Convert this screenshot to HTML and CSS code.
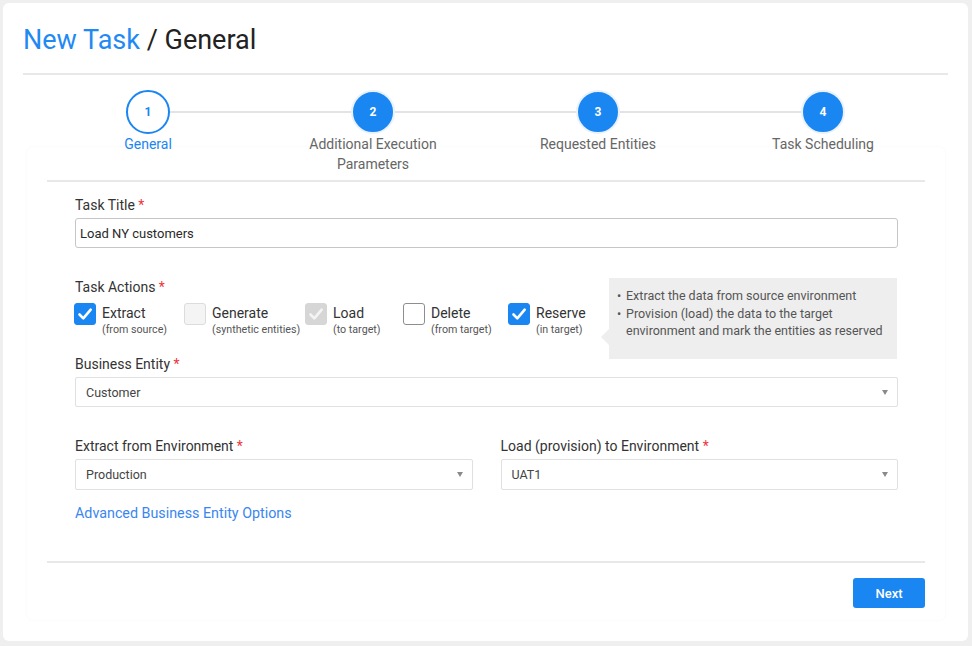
FILE: index.html
```html
<!DOCTYPE html>
<html lang="en">
<head>
<meta charset="utf-8">
<title>New Task / General</title>
<link rel="stylesheet" href="styles.css">
</head>
<body>
<div class="page">
  <header class="head">
    <h1><span class="crumb">New Task</span> / General</h1>
  </header>

  <ol class="stepper">
    <li class="step active"><span class="dot">1</span><span class="step-label">General</span></li>
    <li class="step"><span class="dot">2</span><span class="step-label">Additional Execution Parameters</span></li>
    <li class="step"><span class="dot">3</span><span class="step-label">Requested Entities</span></li>
    <li class="step"><span class="dot">4</span><span class="step-label">Task Scheduling</span></li>
  </ol>

  <section class="card">
    <form class="form">
      <div class="field">
        <label class="label">Task Title <span class="req">*</span></label>
        <input class="input" type="text" value="Load NY customers">
      </div>

      <div class="field actions">
        <div class="label">Task Actions <span class="req">*</span></div>
        <div class="checks">
          <div class="check">
            <span class="box on"><svg viewBox="0 0 22 22"><path d="M5.5 11.5l3.8 3.8 7.4-8.6"/></svg></span>
            <span class="check-text"><span class="check-name">Extract</span><span class="check-sub">(from source)</span></span>
          </div>
          <div class="check">
            <span class="box disabled"></span>
            <span class="check-text"><span class="check-name">Generate</span><span class="check-sub">(synthetic entities)</span></span>
          </div>
          <div class="check">
            <span class="box disabled-on"><svg viewBox="0 0 22 22"><path d="M5.5 11.5l3.8 3.8 7.4-8.6"/></svg></span>
            <span class="check-text"><span class="check-name">Load</span><span class="check-sub">(to target)</span></span>
          </div>
          <div class="check">
            <span class="box"></span>
            <span class="check-text"><span class="check-name">Delete</span><span class="check-sub">(from target)</span></span>
          </div>
          <div class="check">
            <span class="box on"><svg viewBox="0 0 22 22"><path d="M5.5 11.5l3.8 3.8 7.4-8.6"/></svg></span>
            <span class="check-text"><span class="check-name">Reserve</span><span class="check-sub">(in target)</span></span>
          </div>
        </div>
        <div class="tip">
          <ul>
            <li>Extract the data from source environment</li>
            <li>Provision (load) the data to the target environment and mark the entities as reserved</li>
          </ul>
        </div>
      </div>

      <div class="field be">
        <div class="label">Business Entity <span class="req">*</span></div>
        <div class="select"><span>Customer</span><i class="caret"></i></div>
      </div>

      <div class="env-row">
        <div class="field">
          <div class="label">Extract from Environment <span class="req">*</span></div>
          <div class="select tall"><span>Production</span><i class="caret"></i></div>
        </div>
        <div class="field">
          <div class="label">Load (provision) to Environment <span class="req">*</span></div>
          <div class="select tall"><span>UAT1</span><i class="caret"></i></div>
        </div>
      </div>

      <a class="adv-link" href="#">Advanced Business Entity Options</a>
    </form>

    <footer class="card-foot">
      <button class="btn" type="button">Next</button>
    </footer>
  </section>
</div>
</body>
</html>
```

FILE: styles.css
```css
* { box-sizing: border-box; }

html, body {
  margin: 0;
  background: #efefef;
  font-family: Roboto, "Noto Sans", Arial, sans-serif;
  color: #333;
}

.page {
  width: 965px;
  margin: 3px 4px 0 3px;
  background: #fff;
  border-radius: 6px;
  padding: 22px 20px 21px;
}

.head {
  border-bottom: 2px solid #e8e8e8;
  padding-bottom: 17px;
}

.head h1 {
  margin: 0;
  font-size: 27px;
  line-height: 31px;
  font-weight: 400;
  color: #222;
}

.crumb { color: #1f89f4; }

/* Stepper */
.stepper {
  list-style: none;
  margin: 15px 0 0;
  padding: 0;
  height: 90px;
  display: grid;
  grid-template-columns: repeat(4, 225px);
  justify-content: center;
  position: relative;
  z-index: 1;
}

.step {
  position: relative;
  display: flex;
  flex-direction: column;
  align-items: center;
}

.step:not(:last-child)::after {
  content: "";
  position: absolute;
  top: 21px;
  left: 50%;
  width: 100%;
  height: 2px;
  background: #e3e3e3;
}

.dot {
  position: relative;
  z-index: 1;
  width: 44px;
  height: 44px;
  border-radius: 50%;
  background: #1a86f2;
  border: 2px solid #e9f1fb;
  color: #fff;
  font-size: 12px;
  font-weight: 700;
  display: flex;
  align-items: center;
  justify-content: center;
}

.step.active .dot {
  background: #fff;
  border: 2px solid #1a86f2;
  color: #1a86f2;
}

.step-label {
  margin-top: 1px;
  max-width: 150px;
  text-align: center;
  font-size: 14px;
  line-height: 19.5px;
  color: #666;
}

.step.active .step-label { color: #1a86f2; }

/* Card */
.card {
  margin: -33px 3px 0 4px;
  padding: 33px 20px 12px;
  background: #fff;
  border-radius: 6px;
  box-shadow: 0 0 3px rgba(0, 0, 0, 0.045);
}

.form {
  border-top: 2px solid #e8e8e8;
  padding: 15px 27px 39px 28px;
  display: flex;
  flex-direction: column;
}

.field { display: flex; flex-direction: column; }

.label {
  font-size: 14px;
  line-height: 17px;
  color: #333;
  margin-bottom: 4px;
}

.req { color: #f0323c; }

.input {
  height: 30px;
  border: 1px solid #c6c6c6;
  border-radius: 3px;
  padding: 0 4px;
  font-family: inherit;
  font-size: 13px;
  color: #2a2a2a;
  margin-bottom: 31px;
  outline: none;
}

/* Actions */
.actions { position: relative; }

.actions .label { margin-bottom: 7px; }

.checks {
  display: grid;
  grid-template-columns: 110px 121px 98px 105px auto;
  margin-left: -1px;
}

.check { display: flex; align-items: flex-start; }

.box {
  flex: none;
  width: 22px;
  height: 22px;
  border-radius: 3px;
  border: 1px solid #8e8e8e;
  background: #fff;
  margin-right: 6px;
  display: flex;
}

.box svg { width: 22px; height: 22px; margin: -1px; }
.box path { fill: none; stroke: #fff; stroke-width: 2.6; stroke-linecap: round; stroke-linejoin: round; }

.box.on { background: #1a86f2; border-color: #1a86f2; }
.box.disabled { background: #f4f4f4; border-color: #dcdcdc; }
.box.disabled-on { background: #d6d6d6; border-color: #d6d6d6; }
.box.disabled-on path { stroke: #f4f4f4; }

.check-text {
  display: flex;
  flex-direction: column;
  padding-top: 2px;
}

.check-name { font-size: 14px; line-height: 17px; color: #333; }
.check-sub { font-size: 10.7px; line-height: 15px; color: #555; }

.tip {
  position: absolute;
  left: 534px;
  top: -1px;
  width: 288px;
  height: 81px;
  background: #eeeeee;
  padding: 9px 8px 0;
}

.tip::before {
  content: "";
  position: absolute;
  left: -8px;
  top: 51px;
  border-top: 8px solid transparent;
  border-bottom: 8px solid transparent;
  border-right: 8px solid #eeeeee;
}

.tip ul { margin: 0; padding: 0; list-style: none; }

.tip li {
  position: relative;
  padding-left: 9px;
  font-size: 12.5px;
  line-height: 17.5px;
  color: #555;
}

.tip li::before {
  content: "•";
  position: absolute;
  left: 0;
  font-size: 12.5px;
}

.be { margin-top: 19px; }

.select {
  height: 30px;
  border: 1px solid #e0e0e0;
  border-radius: 2px;
  padding: 0 9px 0 10px;
  display: flex;
  align-items: center;
  justify-content: space-between;
  font-size: 12.5px;
  color: #444;
}

.select.tall { height: 31px; }

.caret {
  width: 0;
  height: 0;
  border-left: 3.5px solid transparent;
  border-right: 3.5px solid transparent;
  border-top: 5px solid #8a8a8a;
}

.env-row {
  margin-top: 31px;
  display: grid;
  grid-template-columns: 1fr 1fr;
  column-gap: 28px;
}

.adv-link {
  margin-top: 15px;
  font-size: 14.3px;
  line-height: 17px;
  color: #3a86f0;
  text-decoration: none;
  align-self: flex-start;
}

.card-foot {
  border-top: 2px solid #e8e8e8;
  padding-top: 15px;
  display: flex;
  justify-content: flex-end;
}

.btn {
  width: 72px;
  height: 30px;
  border: 0;
  border-radius: 3px;
  background: #1a86f2;
  color: #fff;
  font-family: inherit;
  font-size: 13px;
  font-weight: 500;
}
```
